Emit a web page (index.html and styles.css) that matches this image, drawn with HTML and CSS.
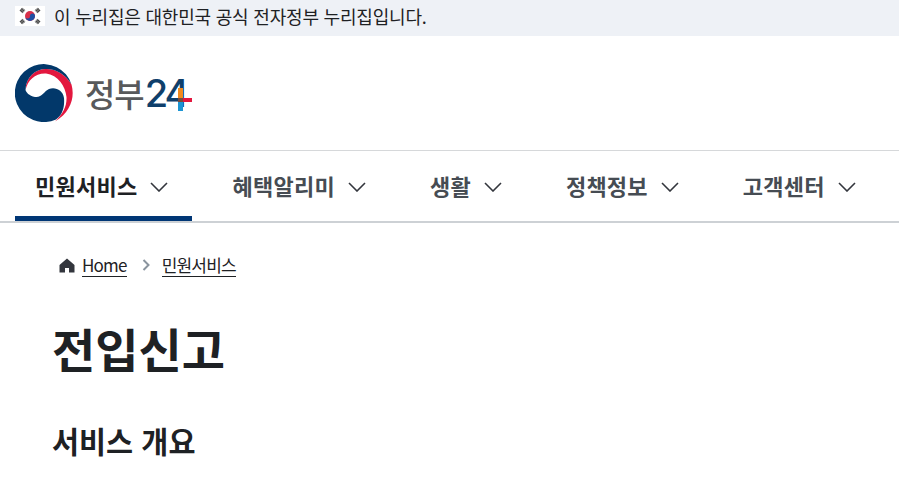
FILE: index.html
```html
<!DOCTYPE html>
<html lang="ko">
<head>
    <meta charset="UTF-8">
    <meta name="viewport" content="width=device-width, initial-scale=1.0">
    <title>전입신고</title>
    <link rel="stylesheet" href="styles.css">
</head>
<body>
    <div class="gov-banner">
        <svg class="flag" viewBox="0 0 30 20" width="30" height="20">
            <rect width="30" height="20" fill="#fff"/>
            <circle cx="15" cy="10" r="5" fill="#d8304a"/>
            <path d="M10 10a5 5 0 0 0 10 0a2.500 2.500 0 0 0-5 0a2.500 2.500 0 0 1-5 0z" fill="#1f4fa3"/>
            <g fill="none" stroke="#222" stroke-width="4" stroke-dasharray=".9 .4">
                <path d="M5.800 3.200l3.200 2.600M24.200 3.200l-3.200 2.600M5.800 16.800l3.200-2.600M24.200 16.800l-3.200-2.600"/>
            </g>
        </svg>
        <span>이 누리집은 대한민국 공식 전자정부 누리집입니다.</span>
    </div>

    <header class="logo-bar">
        <a class="logo" href="#">
            <svg class="emblem" viewBox="0 0 58 58" width="58" height="58">
                <path d="M10.500 26C11 13 20 5 31 5C42 5 51 11 56.500 20.500C60 33 56 48 40 57.500C48 50 52 42 51.500 33C50.500 22 43 11 31 9.500C20 9 13 16 10.500 26z" fill="#e3173e"/>
                <path d="M56.500 20.500A29 29 0 1 0 41 55.400C49 50 49.500 40 49 34C48 26 40 22.500 34 25C29 27 27 34 20 33C14 32 11 28 10.500 26C11 13 20 5 31 5C42 5 51 11 56.500 20.500z" fill="#02386a"/>
            </svg>
            <span class="logo-word">정부</span>
            <span class="logo-num">24</span>
            <svg class="logo-plus" viewBox="0 0 14 23" width="14" height="23">
                <rect x="0" y="0" width="5" height="10" fill="#f08a1d"/>
                <rect x="0" y="10" width="5" height="4" fill="#7a4a3a"/>
                <rect x="5" y="10" width="9" height="4" fill="#e3173e"/>
                <rect x="0" y="14" width="5" height="9" fill="#1b95d3"/>
            </svg>
        </a>
    </header>

    <nav class="main-nav">
        <a class="nav-item active" href="#">민원서비스<svg class="chev" viewBox="0 0 18 10" width="18" height="10"><path d="M1 1l8 8 8-8"/></svg></a>
        <a class="nav-item" href="#">혜택알리미<svg class="chev" viewBox="0 0 18 10" width="18" height="10"><path d="M1 1l8 8 8-8"/></svg></a>
        <a class="nav-item" href="#">생활<svg class="chev" viewBox="0 0 18 10" width="18" height="10"><path d="M1 1l8 8 8-8"/></svg></a>
        <a class="nav-item" href="#">정책정보<svg class="chev" viewBox="0 0 18 10" width="18" height="10"><path d="M1 1l8 8 8-8"/></svg></a>
        <a class="nav-item" href="#">고객센터<svg class="chev" viewBox="0 0 18 10" width="18" height="10"><path d="M1 1l8 8 8-8"/></svg></a>
    </nav>

    <main class="content">
        <div class="breadcrumb">
            <svg class="home" viewBox="0 0 16 16" width="16" height="16"><path d="M8 1.500L.5 8v7.500h5.500V11h4v4.500h5.500V8z"/></svg>
            <a href="#">Home</a>
            <svg class="crumb-sep" viewBox="0 0 8 12" width="8" height="12"><path d="M1.500 1l5 5-5 5"/></svg>
            <a href="#">민원서비스</a>
        </div>
        <h1>전입신고</h1>
        <h2>서비스 개요</h2>
    </main>
</body>
</html>
```

FILE: styles.css
```css
* {
    box-sizing: border-box;
}
body {
    margin: 0;
    height: 502px;
    overflow: hidden;
    background: #fff;
    color: #1e2124;
    font-family: "Noto Sans CJK KR", "Noto Sans", sans-serif;
}
a {
    color: inherit;
    text-decoration: none;
}
.gov-banner {
    display: flex;
    align-items: center;
    gap: 9px;
    height: 36px;
    padding: 0 0 4px 15px;
    background: #eef1f6;
    font-size: 18px;
    letter-spacing: -0.2px;
}
.logo-bar {
    display: flex;
    align-items: center;
    height: 115px;
    padding: 0 15px;
    border-bottom: 1px solid #d6d8da;
}
.logo {
    display: flex;
    align-items: center;
}
.emblem {
    margin-right: 12px;
}
.logo-word {
    color: #58595b;
    font-size: 33px;
    font-weight: 500;
    line-height: 1;
    letter-spacing: -1px;
    margin-right: 1px;
}
.logo-num {
    color: #0f3f6b;
    font-family: "Inter", sans-serif;
    font-size: 38px;
    font-weight: 500;
    line-height: 1;
    letter-spacing: -3px;
}
.logo-plus {
    margin: 12px 0 0 -9px;
}
.main-nav {
    display: flex;
    gap: 20px;
    height: 72px;
    padding: 0 15px;
    border-bottom: 2px solid #cdd1d5;
}
.nav-item {
    display: flex;
    align-items: center;
    gap: 13px;
    height: 70px;
    padding: 3px 24px 0 20px;
    color: #464c53;
    font-size: 22px;
    font-weight: 700;
    letter-spacing: 0.25px;
    border-bottom: 5px solid transparent;
}
.nav-item.active {
    color: #1e2124;
    border-bottom-color: #003675;
}
.chev {
    margin-top: 3px;
    fill: none;
    stroke: #33363d;
    stroke-width: 1.600;
}
.content {
    padding: 29px 52px 0;
}
.breadcrumb {
    display: flex;
    align-items: center;
    padding-left: 7px;
    font-size: 17px;
    letter-spacing: -0.8px;
    height: 26px;
}
.breadcrumb a {
    color: #1e2124;
    line-height: 22px;
    border-bottom: 1px solid #1e2124;
}
.home {
    fill: #33363d;
    margin-right: 7px;
}
.crumb-sep {
    fill: none;
    stroke: #8a949e;
    stroke-width: 2;
    margin: 0 12px 0 15px;
}
h1 {
    margin: 38px 0 0;
    font-size: 47px;
    line-height: 64px;
    font-weight: 700;
}
h2 {
    margin: 38px 0 0;
    font-size: 29.400px;
    line-height: 44px;
    font-weight: 700;
}
```
